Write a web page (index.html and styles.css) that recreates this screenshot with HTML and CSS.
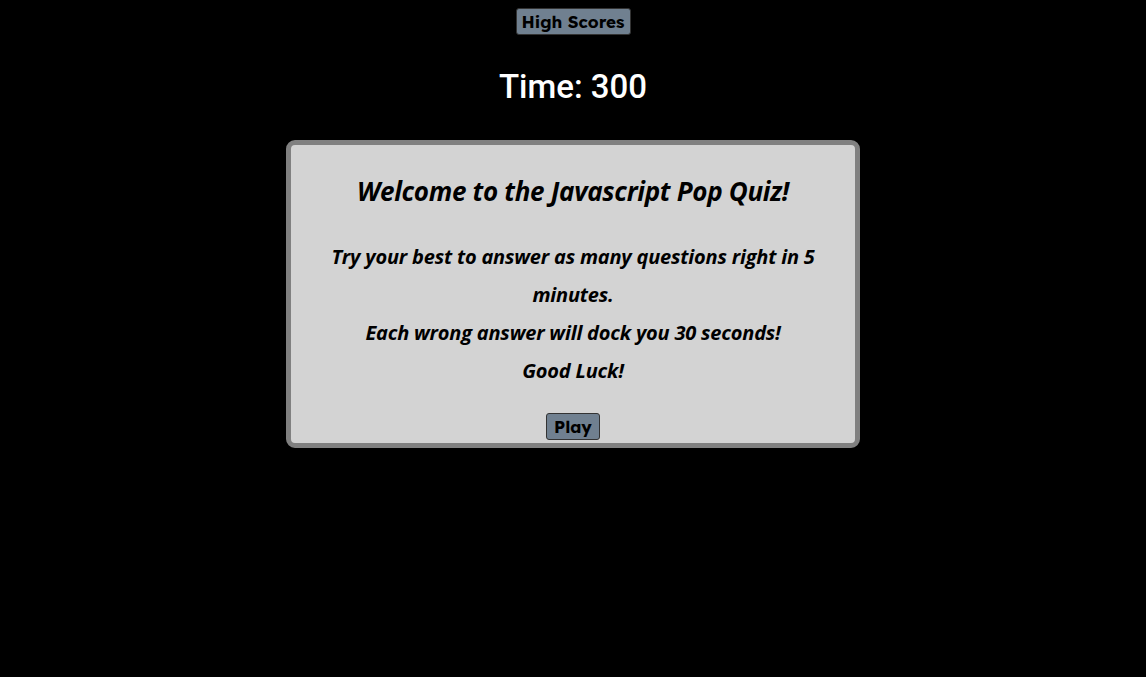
FILE: index.html
```html
<!DOCTYPE html>
<html>
<head>
<meta charset="utf-8">
<link rel="stylesheet" href="styles.css">
</head>
<body>
<div class="page">
  <button class="btn scores">High Scores</button>
  <div class="time">Time: 300</div>
  <div class="card">
    <h1 class="title">Welcome to the Javascript Pop Quiz!</h1>
    <p class="intro">Try your best to answer as many questions right in 5 minutes.<br>Each wrong answer will dock you 30 seconds!<br>Good Luck!</p>
    <button class="btn play">Play</button>
  </div>
</div>
</body>
</html>
```
FILE: styles.css
```css
html, body {
  margin: 0;
  padding: 0;
  background: #000;
  height: 100%;
}
.page {
  display: flex;
  flex-direction: column;
  align-items: center;
  padding-top: 8px;
}
.btn {
  font-family: "Lexend", "Noto Sans", "Open Sans", sans-serif;
  font-weight: 700;
  color: #000;
  background: #708090;
  border: 1px solid #333;
  border-radius: 3px;
  cursor: pointer;
  padding: 0;
  white-space: nowrap;
}
.scores {
  width: 115px;
  height: 27px;
  font-size: 17px;
  line-height: 25px;
}
.time {
  margin-top: 32px;
  font-family: "Roboto", "Noto Sans", sans-serif;
  font-size: 33px;
  font-weight: 500;
  color: #fff;
  line-height: 40px;
}
.card {
  margin-top: 33px;
  width: 564px;
  height: 298px;
  background: #d3d3d3;
  border: 5px solid #808080;
  border-radius: 9px;
  display: flex;
  flex-direction: column;
  align-items: center;
}
.title {
  margin: 30px 0 0 0;
  font-family: "Open Sans", sans-serif;
  font-style: italic;
  font-weight: 700;
  font-size: 26px;
  line-height: 32px;
  color: #000;
  letter-spacing: -0.3px;
}
.intro {
  margin: 31px 0 0 0;
  width: 510px;
  text-align: center;
  font-family: "Open Sans", sans-serif;
  font-style: italic;
  font-weight: 700;
  font-size: 20px;
  line-height: 38px;
  color: #000;
  letter-spacing: -0.2px;
}
.play {
  margin-top: 23px;
  width: 54px;
  height: 27px;
  font-size: 17px;
  line-height: 25px;
}
```
